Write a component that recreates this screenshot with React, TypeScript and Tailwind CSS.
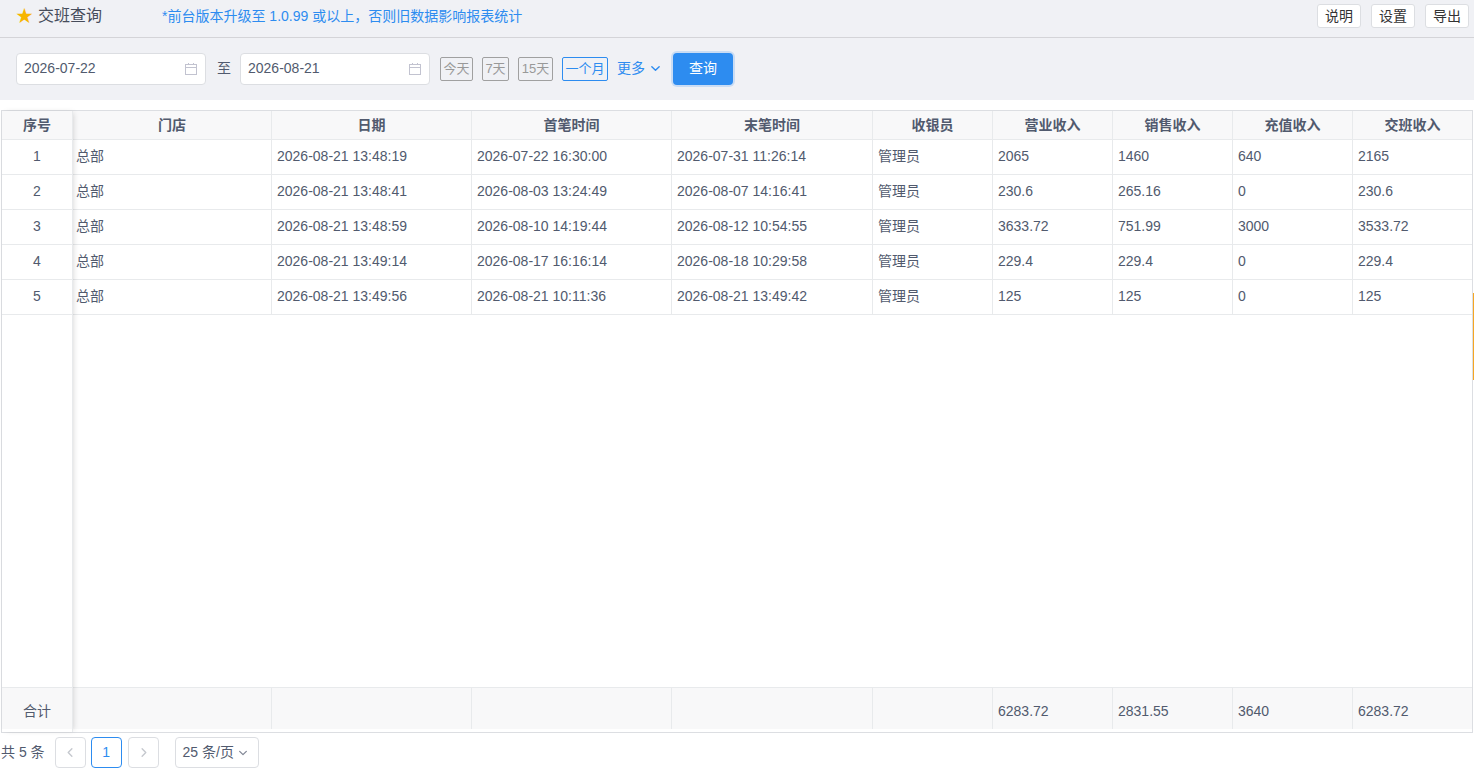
import React from "react";

const FONT = '"Liberation Sans", "Noto Sans CJK SC", Arial, sans-serif';

const rows = [
  ["1", "总部", "2026-08-21 13:48:19", "2026-07-22 16:30:00", "2026-07-31 11:26:14", "管理员", "2065", "1460", "640", "2165"],
  ["2", "总部", "2026-08-21 13:48:41", "2026-08-03 13:24:49", "2026-08-07 14:16:41", "管理员", "230.6", "265.16", "0", "230.6"],
  ["3", "总部", "2026-08-21 13:48:59", "2026-08-10 14:19:44", "2026-08-12 10:54:55", "管理员", "3633.72", "751.99", "3000", "3533.72"],
  ["4", "总部", "2026-08-21 13:49:14", "2026-08-17 16:16:14", "2026-08-18 10:29:58", "管理员", "229.4", "229.4", "0", "229.4"],
  ["5", "总部", "2026-08-21 13:49:56", "2026-08-21 10:11:36", "2026-08-21 13:49:42", "管理员", "125", "125", "0", "125"],
];

const heads = ["门店", "日期", "首笔时间", "末笔时间", "收银员", "营业收入", "销售收入", "充值收入", "交班收入"];
const totals = ["", "", "", "", "", "6283.72", "2831.55", "3640", "6283.72"];

const GRID = "grid grid-cols-[199px_200px_200px_201px_120px_120px_120px_120px_119px]";

function CalIcon() {
  return (
    <svg width="14" height="14" viewBox="0 0 14 14" fill="none" stroke="#c2c3d0" strokeWidth="1">
      <rect x="1.5" y="2.5" width="11" height="10" />
      <line x1="1.5" y1="5.5" x2="12.5" y2="5.5" />
      <line x1="4.5" y1="1" x2="4.5" y2="3" />
      <line x1="9.5" y1="1" x2="9.5" y2="3" />
    </svg>
  );
}

function Chevron({ dir = "down", color = "#2d8cf0", size = 10 }: { dir?: "down" | "left" | "right"; color?: string; size?: number }) {
  const d = dir === "down" ? "M2 4 L6 8 L10 4" : dir === "left" ? "M7.5 2 L3.5 6 L7.5 10" : "M4.5 2 L8.5 6 L4.5 10";
  return (
    <svg width={size} height={size} viewBox="0 0 12 12" fill="none" stroke={color} strokeWidth="1.5" strokeLinecap="round" strokeLinejoin="round">
      <path d={d} />
    </svg>
  );
}

function DateInput({ value }: { value: string }) {
  return (
    <div className="flex h-[32px] w-[190px] items-center justify-between rounded-[4px] border border-[#dcdee2] bg-white pl-[7px] pr-[7px] text-[14px] text-[#515a6e]">
      <span>{value}</span>
      <CalIcon />
    </div>
  );
}

export default function App() {
  return (
    <div className="relative h-[773px] w-[1474px] overflow-hidden bg-white" style={{ fontFamily: FONT }}>
      {/* Title bar */}
      <div className="flex h-[38px] items-center border-b border-[#d4d4d8] bg-[#f0f1f5] pb-[5px] pl-[16px] pr-[5px]">
        <span className="text-[17px] leading-none text-[#f7b500]">★</span>
        <span className="ml-[5px] text-[16px] text-[#464c5b]">交班查询</span>
        <span className="ml-[60px] text-[14px] text-[#2d8cf0]">*前台版本升级至 1.0.99 或以上，否则旧数据影响报表统计</span>
        <div className="ml-auto flex gap-[10px]">
          {["说明", "设置", "导出"].map((t) => (
            <div key={t} className="flex h-[24px] w-[44px] items-center justify-center rounded-[3px] border border-[#dcdee2] bg-white text-[14px] text-[#333]">
              {t}
            </div>
          ))}
        </div>
      </div>

      {/* Filter bar */}
      <div className="flex h-[62px] items-center bg-[#f0f1f5] pb-[1px] pl-[16px]">
        <DateInput value="2026-07-22" />
        <span className="ml-[11px] mr-[9px] text-[14px] text-[#515a6e]">至</span>
        <DateInput value="2026-08-21" />
        <div className="ml-[10px] flex items-center gap-[9px] text-[13px]">
          <div className="flex h-[24px] w-[33px] items-center justify-center rounded-[2px] border border-[#a0a0a0] text-[#999]">今天</div>
          <div className="flex h-[24px] w-[27px] items-center justify-center rounded-[2px] border border-[#a0a0a0] text-[#999]">7天</div>
          <div className="flex h-[24px] w-[35px] items-center justify-center rounded-[2px] border border-[#a0a0a0] text-[#999]">15天</div>
          <div className="flex h-[24px] w-[46px] items-center justify-center rounded-[2px] border border-[#2d8cf0] text-[#2d8cf0]">一个月</div>
          <div className="flex items-center gap-[5px] text-[14px] text-[#2d8cf0]">
            <span>更多</span>
            <Chevron size={11} />
          </div>
        </div>
        <div className="ml-[12px] flex h-[32px] w-[60px] items-center justify-center rounded-[4px] bg-[#2d8cf0] text-[14px] text-white shadow-[0_0_0_2px_rgba(45,140,240,0.2)]">
          查询
        </div>
      </div>

      {/* Table */}
      <div className="ml-[1px] mt-[10px] flex h-[623px] w-[1472px] border border-[#dcdee2] text-[14px] text-[#515a6e]">
        {/* Fixed column */}
        <div className="relative z-10 flex w-[71px] flex-col border-r border-[#e8eaec] bg-white shadow-[2px_0_6px_-2px_rgba(0,0,0,0.18)]">
          <div className="flex h-[29px] items-center justify-center border-b border-[#e8eaec] bg-[#f8f8f9] font-bold">序号</div>
          {rows.map((r) => (
            <div key={r[0]} className="flex h-[35px] items-center justify-center border-b border-[#e8eaec] pb-[1px]">
              {r[0]}
            </div>
          ))}
          <div className="flex-1" />
          <div className="flex h-[42px] items-center justify-center border-t border-[#e8eaec] bg-[#f8f8f9] pt-[6px]">合计</div>
          <div className="h-[3px]" />
        </div>
        {/* Scrollable columns */}
        <div className="flex flex-1 flex-col">
          <div className={`${GRID} h-[29px] border-b border-[#e8eaec] bg-[#f8f8f9] font-bold`}>
            {heads.map((h, i) => (
              <div key={h} className={`flex items-center justify-center ${i < 8 ? "border-r border-[#e8eaec]" : ""}`}>
                {h}
              </div>
            ))}
          </div>
          {rows.map((r) => (
            <div key={r[0]} className={`${GRID} h-[35px] border-b border-[#e8eaec]`}>
              {r.slice(1).map((c, i) => (
                <div key={i} className={`flex items-center pb-[1px] ${i === 0 ? "pl-[3px]" : "pl-[5px]"} ${i < 8 ? "border-r border-[#e8eaec]" : ""}`}>
                  {c}
                </div>
              ))}
            </div>
          ))}
          <div className="flex-1" />
          <div className={`${GRID} h-[42px] border-t border-[#e8eaec] bg-[#f8f8f9]`}>
            {totals.map((c, i) => (
              <div key={i} className={`flex items-center pl-[5px] pt-[6px] ${i < 8 ? "border-r border-[#e8eaec]" : ""}`}>
                {c}
              </div>
            ))}
          </div>
          <div className="h-[3px]" />
        </div>
      </div>

      {/* Pagination */}
      <div className="mt-[4px] flex h-[31px] items-center pl-[1px] text-[14px] text-[#515a6e]">
        <span>共 5 条</span>
        <div className="ml-[10px] flex h-[31px] w-[31px] items-center justify-center rounded-[4px] border border-[#dcdee2]">
          <Chevron dir="left" color="#c5c8ce" size={11} />
        </div>
        <div className="ml-[5px] flex h-[31px] w-[31px] items-center justify-center rounded-[4px] border border-[#2d8cf0] text-[#2d8cf0]">1</div>
        <div className="ml-[6px] flex h-[31px] w-[31px] items-center justify-center rounded-[4px] border border-[#dcdee2]">
          <Chevron dir="right" color="#c5c8ce" size={11} />
        </div>
        <div className="ml-[16px] flex h-[31px] w-[84px] items-center gap-[4px] rounded-[4px] border border-[#dcdee2] pl-[7px]">
          <span>25 条/页</span>
          <Chevron color="#808695" size={10} />
        </div>
      </div>

      {/* Orange scroll indicator overlay */}
      <div className="absolute left-[1473px] top-[293px] h-[87px] w-[1px] bg-[#f5a623]" />
    </div>
  );
}
